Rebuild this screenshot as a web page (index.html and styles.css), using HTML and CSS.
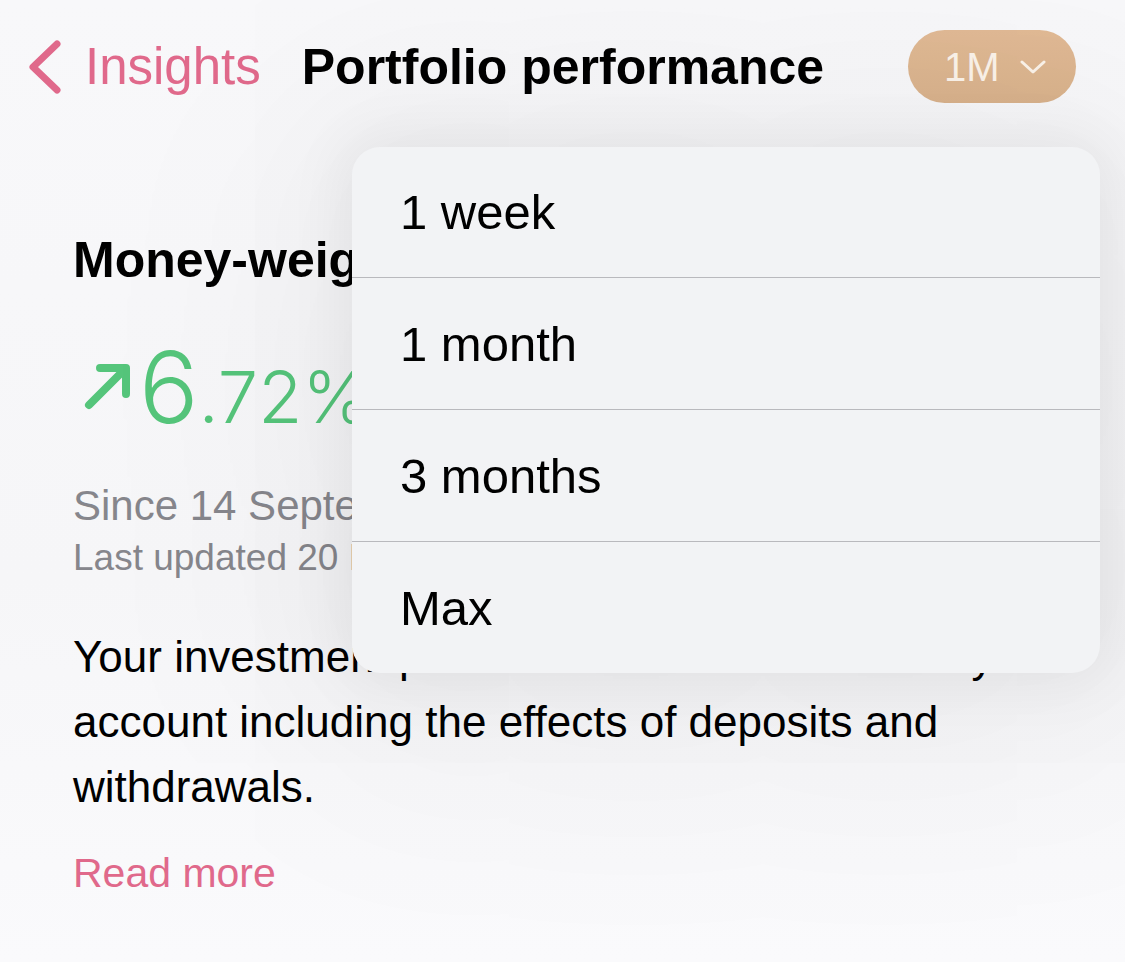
FILE: index.html
```html
<!DOCTYPE html>
<html lang="en">
<head>
<meta charset="utf-8">
<title>Portfolio performance</title>
<link rel="stylesheet" href="styles.css">
</head>
<body>
<div class="screen">
  <header class="nav">
    <a class="back" href="#">
      <svg class="back-chev" width="36" height="56" viewBox="0 0 36 56" aria-hidden="true">
        <path d="M31 5 L7 28 L31 51" fill="none" stroke="currentColor" stroke-width="7" stroke-linecap="round" stroke-linejoin="round"/>
      </svg>
      <span class="back-label">Insights</span>
    </a>
    <h1 class="title">Portfolio performance</h1>
    <button class="range" type="button">
      <span class="range-label">1M</span>
      <svg class="range-chev" width="26" height="16" viewBox="0 0 26 16" aria-hidden="true">
        <path d="M2 3 L13 13 L24 3" fill="none" stroke="currentColor" stroke-width="3" stroke-linecap="round" stroke-linejoin="round"/>
      </svg>
    </button>
  </header>

  <main class="content">
    <h2 class="metric-title">Money-weighted return</h2>
    <div class="metric-value">
      <svg class="arrow" width="50" height="50" viewBox="0 0 50 50" aria-hidden="true">
        <path d="M6 44 L42 8 M17 7 H43 V33" fill="none" stroke="currentColor" stroke-width="8" stroke-linecap="round" stroke-linejoin="round"/>
      </svg><span class="int">6</span><span class="dec">.72%</span>
    </div>
    <p class="since">Since 14 September 2023</p>
    <p class="updated">Last updated 20 November 2024</p>
    <p class="desc">Your investment performance for the whole of your<br>account including the effects of deposits and<br>withdrawals.</p>
    <a class="more" href="#">Read more</a>
  </main>

  <div class="menu" role="menu">
    <div class="menu-item" role="menuitem">1 week</div>
    <div class="menu-item" role="menuitem">1 month</div>
    <div class="menu-item" role="menuitem">3 months</div>
    <div class="menu-item" role="menuitem">Max</div>
  </div>
</div>
</body>
</html>
```

FILE: styles.css
```css
html, body {
  margin: 0;
  padding: 0;
}

body {
  width: 1125px;
  height: 962px;
  overflow: hidden;
  background: #f8f8fa;
  font-family: "Liberation Sans", Arial, sans-serif;
  color: #000;
}

.screen {
  position: relative;
  width: 1125px;
  height: 962px;
  background: linear-gradient(180deg, #f8f8fa 0%, #f6f6f8 60%, #fafafc 100%);
}

/* ---------- nav bar ---------- */
.nav {
  display: flex;
  align-items: center;
  height: 73px;
  padding: 30px 49px 0 26px;
}

.back {
  display: flex;
  align-items: center;
  color: #e0698b;
  text-decoration: none;
}

.back-chev {
  display: block;
  margin-right: 23px;
}

.back-label {
  font-size: 51px;
  line-height: 60px;
}

.title {
  margin: 0 0 0 41px;
  font-size: 50px;
  line-height: 60px;
  font-weight: 700;
  letter-spacing: 0;
}

.range {
  margin-left: auto;
  display: flex;
  align-items: center;
  width: 168px;
  height: 73px;
  padding: 0 30px 0 36px;
  border: 0;
  border-radius: 37px;
  background: linear-gradient(180deg, #e1ba95 0%, #d9b28c 100%);
  color: #fbf3ea;
  font-family: "Liberation Sans", Arial, sans-serif;
  box-sizing: border-box;
}

.range-label {
  font-size: 40px;
  line-height: 48px;
}

.range-chev {
  display: block;
  margin-left: auto;
}

/* ---------- content ---------- */
.content {
  padding: 0 0 0 73px;
}

.metric-title {
  margin: 127px 0 0;
  font-size: 50px;
  line-height: 60px;
  font-weight: 700;
  white-space: nowrap;
}

.metric-value {
  margin-top: 47px;
  height: 100px;
  line-height: 100px;
  color: #55c57b;
  font-family: Inter, Roboto, "Liberation Sans", sans-serif;
  font-weight: 300;
  white-space: nowrap;
}

.arrow {
  display: inline-block;
  vertical-align: baseline;
  margin: 0 6px 12px 10px;
}

.int {
  font-size: 99px;
}

.dec {
  font-size: 72px;
}

.since {
  margin: 44px 0 0;
  font-size: 42px;
  line-height: 50px;
  color: #86868c;
  white-space: nowrap;
}

.updated {
  margin: 4px 0 0;
  font-size: 37px;
  line-height: 46px;
  color: #86868c;
  white-space: nowrap;
}

.desc {
  margin: 43px 0 0;
  font-size: 44px;
  line-height: 65px;
  white-space: nowrap;
}

.more {
  display: block;
  margin-top: 29px;
  font-size: 41px;
  line-height: 50px;
  color: #e0698b;
  text-decoration: none;
}

/* ---------- dropdown menu (overlay) ---------- */
.menu {
  position: absolute;
  left: 352px;
  top: 147px;
  width: 748px;
  border-radius: 28px;
  background: #f2f3f5;
  box-shadow: 0 0 60px 10px rgba(0, 0, 0, 0.06), 0 20px 240px 60px rgba(0, 0, 0, 0.06);
  overflow: hidden;
}

.menu-item {
  display: flex;
  align-items: center;
  height: 131px;
  padding-left: 48px;
  font-size: 49px;
  color: #000;
  border-top: 1.5px solid #b9b9bd;
}

.menu-item:first-child {
  height: 130px;
  border-top: 0;
}
```
